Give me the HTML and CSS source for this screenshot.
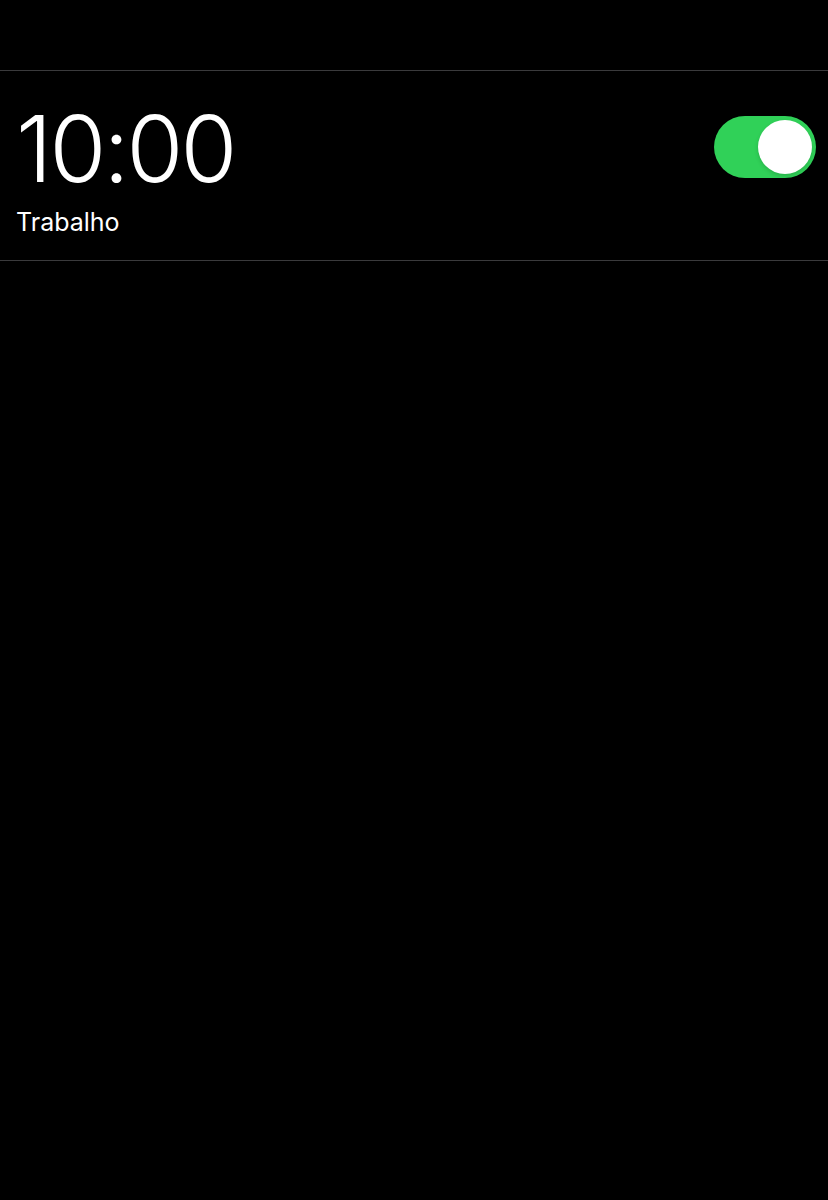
FILE: index.html
```html
<!DOCTYPE html>
<html lang="pt">
<head>
<meta charset="utf-8">
<title>Alarmes</title>
<link rel="stylesheet" href="styles.css">
</head>
<body>
  <div class="top"></div>
  <div class="alarm">
    <div class="info">
      <div class="time">10:00</div>
      <div class="label">Trabalho</div>
    </div>
    <div class="toggle on"><div class="knob"></div></div>
  </div>
</body>
</html>
```
FILE: styles.css
```css
html, body {
  margin: 0;
  padding: 0;
  background: #000;
  color: #fff;
  font-family: "Inter", "Noto Sans", sans-serif;
  height: 100%;
}
.top {
  height: 70px;
  border-bottom: 1px solid #3a3a3c;
}
.alarm {
  display: flex;
  justify-content: space-between;
  align-items: flex-start;
  padding: 0 12px 0 16px;
  height: 189px;
  border-bottom: 1px solid #3a3a3c;
}
.info {
  display: flex;
  flex-direction: column;
}
.time {
  font-size: 92px;
  font-weight: 300;
  line-height: 1;
  margin-top: 32px;
  letter-spacing: -2.8px;
}
.label {
  font-size: 25px;
  font-weight: 400;
  line-height: 1;
  margin-top: 15px;
}
.toggle {
  width: 102px;
  height: 62px;
  border-radius: 31px;
  background: #30d158;
  margin-top: 45px;
  display: flex;
  align-items: center;
  justify-content: flex-end;
  padding: 0 4px;
  box-sizing: border-box;
}
.knob {
  width: 54px;
  height: 54px;
  border-radius: 50%;
  background: #fff;
  box-shadow: 0 2px 4px rgba(0,0,0,0.15);
}
```
